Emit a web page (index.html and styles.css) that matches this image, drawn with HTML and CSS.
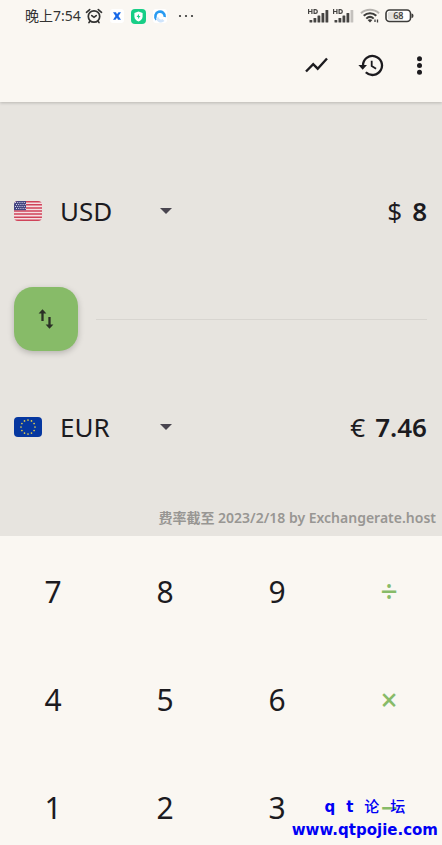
FILE: index.html
```html
<!DOCTYPE html>
<html lang="zh-CN">
<head>
<meta charset="utf-8">
<meta name="viewport" content="width=device-width, initial-scale=1">
<title>USD / EUR</title>
<link rel="stylesheet" href="styles.css">
</head>
<body>
<div class="app">
  <header class="header">
    <div class="status">
      <span class="time">晚上7:54</span>
      <svg class="alarm" width="18" height="16" viewBox="0 0 18 16" fill="none" stroke="#333332" stroke-width="1.7" stroke-linecap="round"><circle cx="9" cy="8.500" r="5.700"/><path d="M1.500 4.300 4.700 1.600M16.500 4.300 13.300 1.600M6.800 7.600 9 9.300 11.200 7.600M5 13.200 4 14.500M13 13.200 14 14.500"/></svg>
      <svg width="14" height="14" viewBox="0 0 14 14"><rect width="14" height="14" rx="3" fill="#fff"/><path d="M3 3.300H6L7 5.200 8.500 3.300H11L8.500 7 11 10.700H8L7 8.700 5.500 10.700H3L5.500 7Z" fill="#1668e8"/></svg>
      <svg width="15" height="15" viewBox="0 0 15 15"><rect width="15" height="15" rx="4" fill="#17ce86"/><path d="M7.500 2.600 11.600 4.100V7.600C11.600 10 9.800 11.700 7.500 12.600 5.200 11.700 3.400 10 3.400 7.600V4.100Z" fill="#fff"/><path d="M8.100 4.800 5.500 8H7.200L6.900 10.300 9.500 7.100H7.900Z" fill="#17ce86"/></svg>
      <svg width="14" height="14" viewBox="0 0 14 14"><rect width="14" height="14" rx="3" fill="#fff"/><path d="M3.600 10.500A4.700 4.700 0 1 1 11.700 8" fill="none" stroke="#279af1" stroke-width="2.600"/><path d="M4.400 8.500A3.600 3.600 0 0 0 10.500 11" fill="none" stroke="#cfe4fb" stroke-width="3"/></svg>
      <svg class="dots" width="16" height="4" viewBox="0 0 16 4" fill="#333332"><circle cx="2" cy="2" r="1.100"/><circle cx="8" cy="2" r="1.100"/><circle cx="14" cy="2" r="1.100"/></svg>
      <span class="signals">
        <svg width="22" height="16" viewBox="0 0 22 16"><g fill="none" stroke="#454442" stroke-width="1.200"><path d="M.6 1V6M3.900 1V6M.6 3.500H3.900M6.100 1.600V5.400H7.300C9.900 5.400 9.900 1.600 7.300 1.600Z"/></g><g fill="#454442"><rect x="1.500" y="12" width="2.800" height="2.500" rx=".6"/><rect x="5.500" y="10" width="2.800" height="4.500" rx=".6"/><rect x="9.500" y="7.500" width="2.800" height="7" rx=".6"/><rect x="13.500" y="5" width="2.800" height="9.500" rx=".6"/><rect x="17.500" y="2" width="2.800" height="12.500" rx=".6"/></g></svg>
        <svg width="22" height="16" viewBox="0 0 22 16"><g fill="none" stroke="#454442" stroke-width="1.200"><path d="M.6 1V6M3.900 1V6M.6 3.500H3.900M6.100 1.600V5.400H7.300C9.900 5.400 9.900 1.600 7.300 1.600Z"/></g><g fill="#454442"><rect x="1.500" y="12" width="2.800" height="2.500" rx=".6"/><rect x="5.500" y="10" width="2.800" height="4.500" rx=".6"/><rect x="9.500" y="7.500" width="2.800" height="7" rx=".6"/><rect x="13.500" y="5" width="2.800" height="9.500" rx=".6"/><rect x="17.500" y="2" width="2.800" height="12.500" rx=".6" fill="#c4c1bd"/></g></svg>
        <svg class="wifi" width="20" height="16" viewBox="0 0 20 16" fill="none" stroke="#3d3c3a" stroke-width="2"><path d="M1 5.200C6 .6 14 .6 19 5.200" stroke="#b5b2ae"/><path d="M3.700 7.800C7.400 4.300 12.600 4.300 16.300 7.800M6.300 10.600C8.500 8.500 11.500 8.500 13.700 10.600"/><path d="M7.600 12 10 14.500 12.400 12Q10 10.500 7.600 12Z" fill="#3d3c3a" stroke="none"/><path d="M15 14V11.500M17.500 11.500V14.500" stroke-width="1.300"/></svg>
        <svg class="battery" width="29" height="14" viewBox="0 0 29 14"><rect x="1" y="1" width="24.500" height="11.500" rx="3.500" fill="#fff" stroke="#3d3c3a" stroke-width="1.600"/><path d="M4.500 2.800H18V10.700H4.500Q2.800 10.700 2.800 9V4.500Q2.800 2.800 4.500 2.800Z" fill="#e2e0dc"/><path d="M26.500 4.500Q28.500 4.500 28.500 6.800T26.500 9Z" fill="#3d3c3a"/><text class="level" x="13.300" y="10" text-anchor="middle">68</text></svg>
      </span>
    </div>
    <nav class="toolbar">
      <button class="tool" aria-label="图表"><svg width="26" height="26" viewBox="0 0 26 26" fill="none" stroke="#1c1b1f" stroke-width="2.400"><path d="M2 19.500 9.200 12.200 13.700 16.700 23 6.500"/></svg></button>
      <button class="tool" aria-label="历史"><svg width="26" height="26" viewBox="0 0 26 26" fill="none" stroke="#1c1b1f" stroke-width="2.300"><path d="M5 13.500A9.500 9.500 0 1 1 7.800 20.200"/><path d="M.4 13H9L4.700 17.700Z" fill="#1c1b1f" stroke="none"/><path d="M13.700 8.700V14.100L18.100 16.700" stroke-width="1.800"/></svg></button>
      <button class="tool" aria-label="更多"><svg width="26" height="26" viewBox="0 0 26 26" fill="#1c1b1f"><circle cx="13.500" cy="6.700" r="2.500"/><circle cx="13.500" cy="13.500" r="2.500"/><circle cx="13.500" cy="20.300" r="2.500"/></svg></button>
    </nav>
  </header>

  <main class="panel">
    <section class="row">
      <svg class="flag" viewBox="0 0 28 20"><defs><clipPath id="round"><rect width="28" height="20" rx="4"/></clipPath></defs><g clip-path="url(#round)"><rect width="28" height="20" fill="#f5dfe2"/><path d="M0 .77H28M0 3.850H28M0 6.920H28M0 10H28M0 13.080H28M0 16.150H28M0 19.230H28" stroke="#cf4359" stroke-width="1.540"/><rect width="12" height="9.200" fill="#454582"/><path d="M1 1.500H12M2 3.500H12M1 5.500H12M2 7.500H12" stroke="#d5d5e7" stroke-width="1" stroke-dasharray="1 1.200"/></g></svg>
      <select class="currency" aria-label="源货币"><option>USD</option><option>EUR</option></select>
      <svg class="caret" viewBox="0 0 12 6"><path d="M0 0H12L6 6Z" fill="#49454f"/></svg>
      <output class="amount"><span class="symbol">$</span><span>8</span></output>
    </section>
    <section class="row">
      <button class="swap" aria-label="交换货币"><svg width="24" height="24" viewBox="0 0 24 24" fill="none" stroke="#2b3026" stroke-width="2.300"><path d="M8.500 14V4.500M15.500 10V19.500"/><path d="M4.600 6.400 8.500 2.200 12.400 6.400ZM11.600 17.600 15.500 21.800 19.400 17.600Z" fill="#2b3026" stroke="none"/></svg></button>
      <hr class="divider">
    </section>
    <section class="row">
      <svg class="flag" viewBox="0 0 28 20"><rect width="28" height="20" rx="4" fill="#0637a0"/><g fill="#e5cf4b"><circle cx="14" cy="3" r=".85"/><circle cx="17.500" cy="3.900" r=".85"/><circle cx="20.100" cy="6.500" r=".85"/><circle cx="21" cy="10" r=".85"/><circle cx="20.100" cy="13.500" r=".85"/><circle cx="17.500" cy="16.100" r=".85"/><circle cx="14" cy="17" r=".85"/><circle cx="10.500" cy="16.100" r=".85"/><circle cx="7.900" cy="13.500" r=".85"/><circle cx="7" cy="10" r=".85"/><circle cx="7.900" cy="6.500" r=".85"/><circle cx="10.500" cy="3.900" r=".85"/></g></svg>
      <select class="currency" aria-label="目标货币"><option>EUR</option><option>USD</option></select>
      <svg class="caret" viewBox="0 0 12 6"><path d="M0 0H12L6 6Z" fill="#49454f"/></svg>
      <output class="amount"><span class="symbol">€</span><span>7.46</span></output>
    </section>
    <p class="source">费率截至 2023/2/18 by Exchangerate.host</p>
  </main>

  <section class="keypad">
    <button class="key">7</button><button class="key">8</button><button class="key">9</button><button class="key operator">÷</button>
    <button class="key">4</button><button class="key">5</button><button class="key">6</button><button class="key operator">×</button>
    <button class="key">1</button><button class="key">2</button><button class="key">3</button><button class="key operator">−</button>
  </section>

  <div class="watermark"><span class="forum"><span>q</span><span>t</span><span class="han">论</span><span class="han">坛</span></span><span>www.qtpojie.com</span></div>
</div>
</body>
</html>
```
FILE: styles.css
```css
* {
  box-sizing: border-box;
}

body {
  margin: 0;
  background: #faf7f2;
  color: #1c1b1f;
  font-family: "Noto Sans", "Noto Sans CJK SC", sans-serif;
}

button {
  padding: 0;
  border: 0;
  background: none;
  color: inherit;
  font: inherit;
}

svg {
  display: block;
  flex: none;
}

.app {
  position: relative;
  display: flex;
  flex-direction: column;
  height: 100vh;
  overflow: hidden;
}

.header {
  position: relative;
  flex: none;
  background: #faf7f2;
  box-shadow: 0 1px 3px rgba(0, 0, 0, 0.2);
}

.status {
  display: flex;
  align-items: center;
  gap: 7px;
  height: 32px;
  padding: 0 28px 0 25px;
}

.time {
  color: #333332;
  font-size: 14px;
  font-weight: 400;
  line-height: 20px;
  white-space: nowrap;
}

.alarm {
  margin-left: -3px;
}

.dots {
  margin-left: 4px;
}

.signals {
  display: flex;
  align-items: center;
  gap: 3px;
  margin-left: auto;
}

.wifi {
  margin-left: 2px;
}

.battery {
  margin-left: 2px;
}

.level {
  fill: #333332;
  font-size: 9px;
  font-weight: 500;
}

.toolbar {
  display: flex;
  justify-content: flex-end;
  gap: 28px;
  height: 70px;
  padding: 0 10px 4px;
}

.tool {
  display: flex;
  align-items: center;
}

.tool:last-child {
  margin-left: -6px;
}

.panel {
  flex: none;
  padding-top: 55px;
  background: #e7e4df;
}

.row {
  display: flex;
  align-items: center;
  height: 108px;
  padding: 0 15px 0 14px;
}

.flag {
  width: 28px;
  height: 20px;
  margin-right: 18px;
}

.currency {
  appearance: none;
  padding: 0;
  border: 0;
  background: none;
  color: inherit;
  font: 26px/36px "Noto Sans", sans-serif;
}

.caret {
  width: 12px;
  height: 6px;
  margin-left: 47px;
}

.amount {
  display: flex;
  gap: 10px;
  margin-left: auto;
  font-size: 26px;
  font-weight: 600;
  line-height: 36px;
}

.symbol {
  font-weight: 400;
}

.swap {
  display: grid;
  place-items: center;
  flex: none;
  width: 64px;
  height: 64px;
  margin-right: 18px;
  border-radius: 19px;
  background: #87bb68;
  box-shadow: 0 2px 6px rgba(0, 0, 0, 0.22);
}

.divider {
  flex: 1;
  height: 1px;
  margin: 0;
  border: 0;
  background: #d8d5d0;
}

.source {
  margin: 0;
  padding: 27px 6px 8px;
  color: #989693;
  font-size: 14px;
  font-weight: 600;
  line-height: 20px;
  text-align: right;
}

.keypad {
  display: grid;
  grid-template-columns: repeat(4, 1fr);
  grid-auto-rows: 108px;
  flex: 1;
  min-height: 0;
  margin: 0 -3px;
  padding-top: 2px;
}

.key {
  font-size: 30px;
  line-height: 40px;
}

.operator {
  color: #87bb68;
  font-weight: 500;
}

.watermark {
  position: absolute;
  right: 4px;
  bottom: 3px;
  display: flex;
  flex-direction: column;
  align-items: center;
  color: #0000f5;
  font: 700 15px/23px "DejaVu Sans", "Noto Sans CJK SC", sans-serif;
}

.forum {
  display: flex;
  gap: 11px;
}

.han {
  font-weight: 500;
}
```
